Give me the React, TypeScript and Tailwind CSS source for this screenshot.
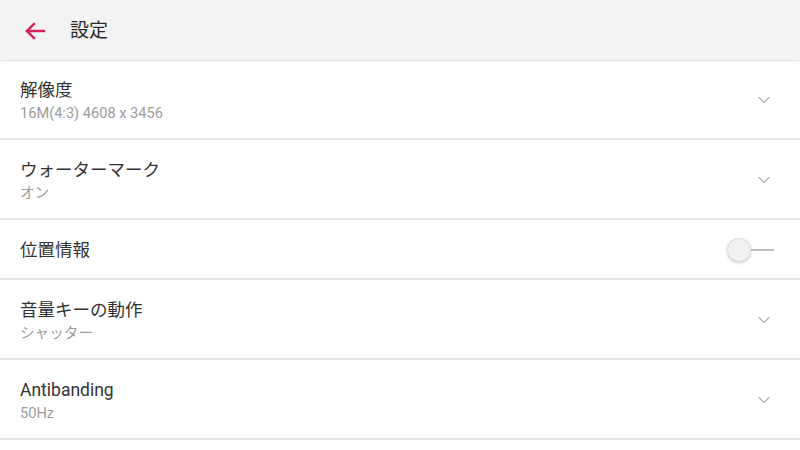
import { ChevronDown } from 'lucide-react';

const font = { fontFamily: 'Roboto, "Noto Sans CJK JP", sans-serif' };

function Row({ title, sub }: { title: string; sub?: string }) {
  return (
    <div className="flex h-20 items-center border-b-2 border-[#e4e4e4] bg-white pl-5 pr-[26px]">
      <div className="flex flex-1 flex-col pt-[4px]">
        <div className="text-[17.5px] leading-[22px] text-[#333333]">{title}</div>
        {sub && <div className="mt-[2px] text-[14.6px] leading-[20px] text-[#9c9c9c]">{sub}</div>}
      </div>
      <ChevronDown className="mt-[2px] h-5 w-5 text-[#b8b8b8]" strokeWidth={1.8} />
    </div>
  );
}

export default function App() {
  return (
    <div className="h-[450px] w-[800px] overflow-hidden bg-white" style={font}>
      <div className="relative z-10 flex h-[60px] items-center bg-[#f3f3f3] pl-6 shadow-[0_1px_2px_rgba(0,0,0,0.15)]">
        <svg width="22" height="18" viewBox="0 0 22 18" fill="none" stroke="#d81b60" strokeWidth="2.4" strokeLinecap="square" className="mt-[2px]">
          <path d="M3 9h17" />
          <path d="M10 2L3 9l7 7" />
        </svg>
        <div className="ml-[24px] mt-[2px] text-[19px] text-[#2b2b2b]">設定</div>
      </div>
      <Row title="解像度" sub="16M(4:3) 4608 x 3456" />
      <Row title="ウォーターマーク" sub="オン" />
      <div className="flex h-[60px] items-center border-b-2 border-[#e4e4e4] bg-white pl-5 pr-[26px]">
        <div className="flex-1 pt-[2px] text-[17.5px] text-[#333333]">位置情報</div>
        <div className="flex items-center pt-[1px]">
          <div className="h-[24px] w-[24px] rounded-full border border-[#dcdcdc] bg-[#f1f1f1] shadow-[0_1px_3px_rgba(0,0,0,0.2)]" />
          <div className="h-[2px] w-[23px] bg-[#bdbdbd]" />
        </div>
      </div>
      <Row title="音量キーの動作" sub="シャッター" />
      <Row title="Antibanding" sub="50Hz" />
      <div className="h-20 bg-white" />
    </div>
  );
}
